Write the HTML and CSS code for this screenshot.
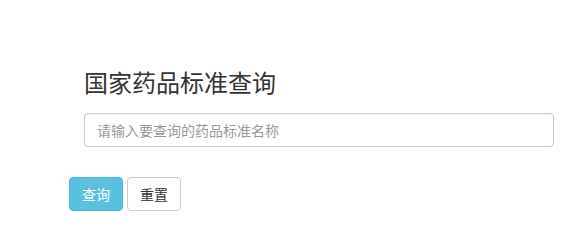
FILE: index.html
```html
<!DOCTYPE html>
<html>
<head>
<meta charset="utf-8">
<link rel="stylesheet" href="styles.css">
</head>
<body>
<div class="page">
  <div class="search-box">
    <h1 class="title">国家药品标准查询</h1>
    <input class="search-input" type="text" placeholder="请输入要查询的药品标准名称">
  </div>
  <div class="actions">
    <button class="btn btn-primary">查询</button>
    <button class="btn btn-default">重置</button>
  </div>
</div>
</body>
</html>
```
FILE: styles.css
```css
html, body {
  margin: 0;
  padding: 0;
  background: #fff;
  font-family: "Microsoft YaHei", "Noto Sans CJK SC", "Liberation Sans", sans-serif;
  color: #333;
}
.page {
  padding: 65px 0 0 69px;
}
.search-box {
  padding-left: 15px;
  width: 470px;
}
.title {
  margin: 0 0 14px 0;
  font-size: 24px;
  font-weight: normal;
  line-height: 34px;
  color: #333;
}
.search-input {
  display: block;
  box-sizing: border-box;
  width: 470px;
  height: 34px;
  padding: 6px 12px;
  font-family: inherit;
  font-size: 14px;
  color: #555;
  border: 1px solid #ccc;
  border-radius: 4px;
  box-shadow: inset 0 1px 1px rgba(0,0,0,.075);
  outline: none;
}
.search-input::placeholder {
  color: #999;
}
.actions {
  display: flex;
  gap: 4px;
  margin-top: 30px;
}
.btn {
  box-sizing: border-box;
  height: 34px;
  padding: 6px 12px;
  font-family: inherit;
  font-size: 14px;
  line-height: 20px;
  border: 1px solid transparent;
  border-radius: 4px;
}
.btn-primary {
  background: #5bc0de;
  border-color: #46b8da;
  color: #fff;
}
.btn-default {
  background: #fff;
  border-color: #ccc;
  color: #333;
}
```
